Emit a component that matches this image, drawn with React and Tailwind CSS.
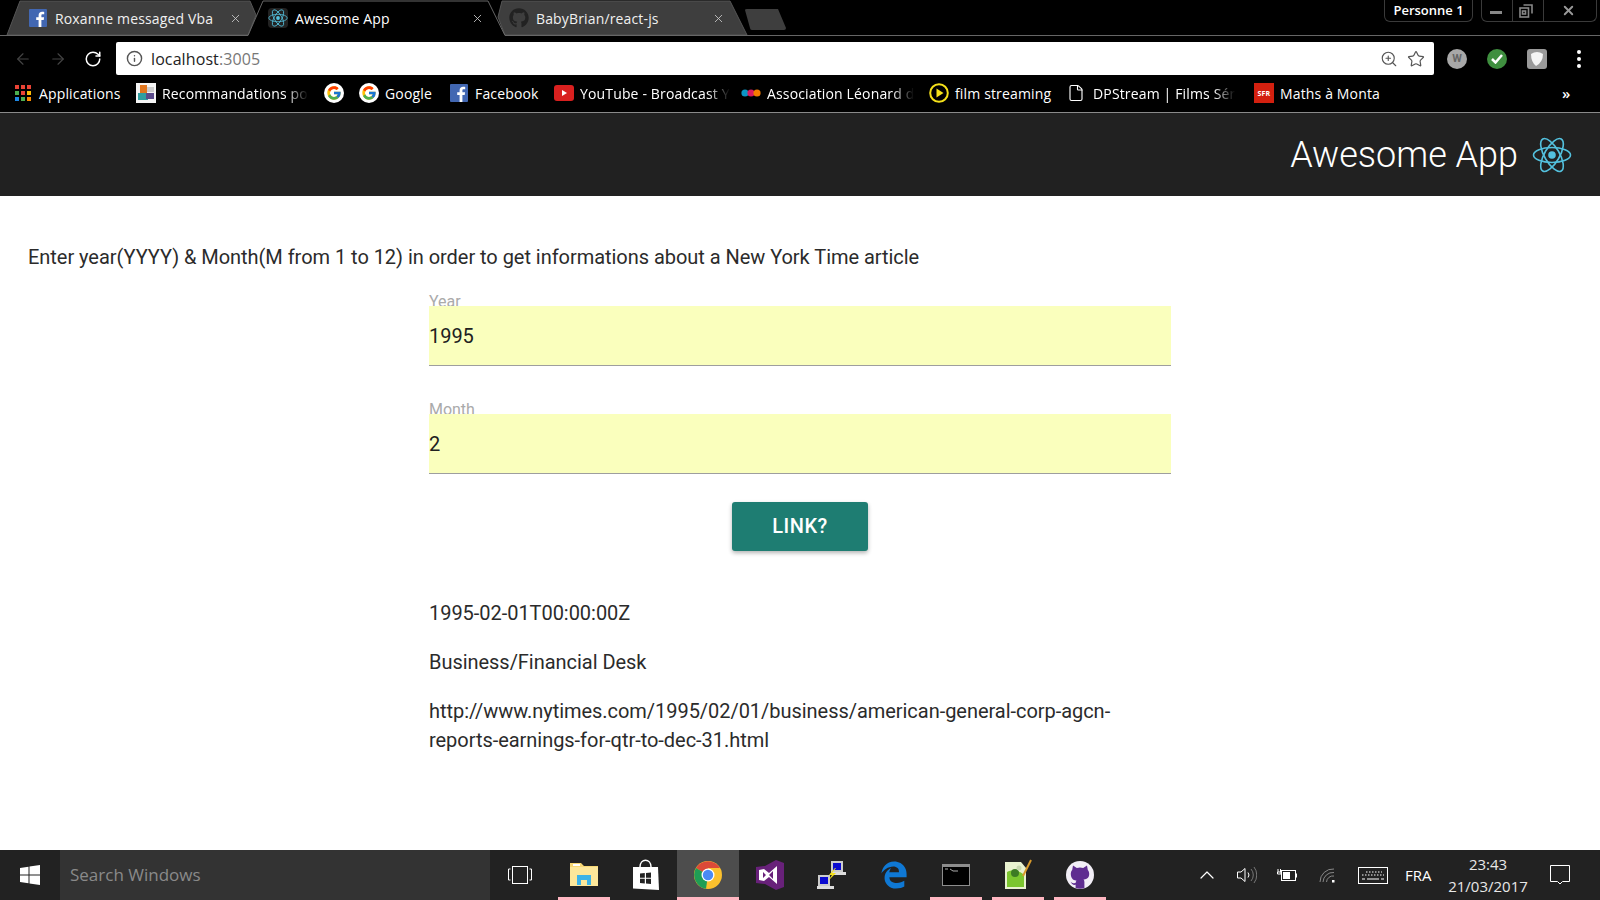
import React from "react";
import { ArrowLeft, ArrowRight, RotateCw, Info, ZoomIn, Star, X, ChevronUp, File } from "lucide-react";
import { FaGithub } from "react-icons/fa";
import { FaEdgeLegacy } from "react-icons/fa6";
import { FcGoogle } from "react-icons/fc";

const ReactLogo = ({ size = 40, color = "#53c1de", sw = 1.6 }) => (
  <svg width={size} height={size} viewBox="0 0 40 40" fill="none" stroke={color} strokeWidth={sw}>
    <ellipse cx="20" cy="20" rx="18.5" ry="7.5" />
    <ellipse cx="20" cy="20" rx="18.5" ry="7.5" transform="rotate(60 20 20)" />
    <ellipse cx="20" cy="20" rx="18.5" ry="7.5" transform="rotate(120 20 20)" />
    <circle cx="20" cy="20" r="3.8" fill={color} stroke="none" />
  </svg>
);

const Fb = ({ size = 18 }) => (
  <svg width={size} height={size} viewBox="0 0 18 18">
    <rect width="18" height="18" rx="1" fill="#4267b2" />
    <path d="M12.4 18v-7h2.3l.4-2.7h-2.7V6.6c0-.8.2-1.3 1.3-1.3h1.5V2.9c-.3 0-1.1-.1-2.1-.1-2.1 0-3.5 1.3-3.5 3.6v1.9H7.2V11h2.4v7z" fill="#fff" />
  </svg>
);

const G = () => (
  <span className="flex h-5 w-5 items-center justify-center rounded-full bg-white">
    <FcGoogle size={16} />
  </span>
);

const Apps = () => (
  <svg width="16" height="16" viewBox="0 0 16 16">
    {[["#ea4335", "#ea4335", "#ea4335"], ["#4caf50", "#ea4335", "#fbbc05"], ["#1e88e5", "#4caf50", "#fb8c00"]].map((row, y) =>
      row.map((c, x) => <rect key={`${x}${y}`} x={x * 6} y={y * 6} width="4" height="4" fill={c} />)
    )}
  </svg>
);

const Recomm = () => (
  <svg width="20" height="20" viewBox="0 0 20 20">
    <rect width="20" height="20" fill="#f4f4f4" />
    <rect x="4" y="2" width="7" height="8" fill="#e0761f" />
    <rect x="11" y="4" width="7" height="5" fill="#ccc" />
    <rect x="2" y="10" width="10" height="7" fill="#2f9ea0" />
    <rect x="10" y="10" width="8" height="6" fill="#5a4a8a" />
  </svg>
);

const Youtube = () => (
  <svg width="20" height="16" viewBox="0 0 20 16">
    <rect width="20" height="16" rx="3" fill="#d9201f" />
    <path d="M8 5l5 3-5 3z" fill="#fff" />
  </svg>
);

const Dots = () => (
  <svg width="20" height="10" viewBox="0 0 20 10">
    <circle cx="4" cy="5" r="3.6" fill="#0b95c5" />
    <circle cx="10" cy="5" r="3.6" fill="#d81b60" />
    <circle cx="16" cy="5" r="3.6" fill="#f57c00" />
  </svg>
);

const PlayCircle = () => (
  <svg width="20" height="20" viewBox="0 0 20 20" fill="none">
    <circle cx="10" cy="10" r="8.8" stroke="#f5e11a" strokeWidth="2" />
    <path d="M7.5 5.5l7 4.5-7 4.5z" fill="#f5e11a" />
  </svg>
);

const Sfr = () => (
  <span className="flex h-5 w-5 items-center justify-center bg-[#d3200f] text-[7px] font-bold leading-none text-white">SFR</span>
);

const Mark = ({ w, children, fade, gap = "ml-[6px]", text }) => (
  <div className="flex shrink-0 items-center" style={{ width: w }}>
    {children}
    {text && (
      <span className={`${gap} whitespace-nowrap ${fade ? "[mask-image:linear-gradient(to_right,black_85%,transparent)]" : ""}`}>
        {text}
      </span>
    )}
  </div>
);

const Tab = ({ w, icon, title, active, mr }) => (
  <div className="relative flex h-[35px] shrink-0 items-center pt-px" style={{ width: w, paddingRight: mr }}>
    <div className="flex w-[20px] shrink-0 items-center justify-center">{icon}</div>
    <span className={`ml-[7px] flex-1 whitespace-nowrap text-[14px] tracking-[0.15px] ${active ? "text-white" : "text-[#f0f0f0]"}`}>{title}</span>
    <X size={13} strokeWidth={1.6} className="text-[#c8c8c8]" />
  </div>
);

const Slot = ({ w = "w-[62px]", children, pink, active }) => (
  <div className={`relative flex h-[50px] ${w} shrink-0 items-center justify-center ${active ? "bg-[#4d4d4d]" : ""}`}>
    {children}
    {pink && <div className={`absolute bottom-0 h-[3px] bg-[#ffb6c1] ${active ? "inset-x-0" : "inset-x-[5px]"}`} />}
  </div>
);

const WinLogo = ({ size = 20 }) => (
  <svg width={size} height={size} viewBox="0 0 20 20" fill="#fff">
    <path d="M0 3l8.5-1.2V9.5H0zM9.5 1.6L20 0v9.5H9.5zM0 10.5h8.5v7.7L0 17zM9.5 10.5H20V20L9.5 18.4z" />
  </svg>
);

const Folder = () => (
  <svg width="28" height="26" viewBox="0 0 28 26">
    <path d="M0 1h11l3 3h14v20H0z" fill="#f7d774" />
    <rect x="0" y="5" width="28" height="19" fill="#fde79a" />
    <rect x="3" y="2" width="7" height="2" fill="#fff" />
    <path d="M7 23V13h14v10h-4v-5h-6v5z" fill="#3db3e8" />
  </svg>
);

const Store = () => (
  <svg width="28" height="32" viewBox="0 0 28 32">
    <path d="M8 8c0-9 11-9 11 0" fill="none" stroke="#fff" strokeWidth="1.5" />
    <path d="M1 8h25l1 23-26-1.5z" fill="#fff" />
    <path d="M8 14.5l4.8-.5v4.700H8zM14 14l5-.5v5.200h-5zM8 19.800h4.800v4.700L8 24zM14 19.800h5V25l-5-.4z" fill="#222" />
  </svg>
);

const Chrome = () => (
  <svg width="28" height="28" viewBox="0 0 28 28">
    <circle cx="14" cy="14" r="14" fill="#fbc02d" />
    <path d="M14 14L2 7a14 14 0 0 1 24 0H14z" fill="#dc4a38" />
    <path d="M14 14L2 7a14 14 0 0 0 10 20.800z" fill="#1f9d55" />
    <circle cx="14" cy="14" r="6.500" fill="#fff" />
    <circle cx="14" cy="14" r="5.200" fill="#4a8af4" />
  </svg>
);

const VS = () => (
  <svg width="28" height="30" viewBox="0 0 28 30">
    <path d="M0 7l9-1 11-6 8 3v24l-8 3-11-6-9-1z" fill="#68217a" />
    <path d="M3 10l5-1 5 4 8-7v18l-8-7-5 4-5-1zM7 12v6l3-3zM17 11l-4 4 4 4z" fill="#fff" fillRule="evenodd" />
  </svg>
);

const Putty = () => (
  <svg width="30" height="30" viewBox="0 0 30 30">
    <rect x="14" y="1" width="12" height="11" fill="#ccc" />
    <rect x="16" y="3" width="8" height="7" fill="#0a0ad0" />
    <rect x="14" y="12" width="15" height="3" fill="#ddd" />
    <rect x="1" y="15" width="12" height="11" fill="#ccc" />
    <rect x="3" y="17" width="8" height="7" fill="#0a0ad0" />
    <rect x="0" y="26" width="17" height="3" fill="#ddd" />
    <path d="M18 8l-6 7 3 0-4 6 8-8h-4l4-5z" fill="#f5e11a" />
  </svg>
);

const Cmd = () => (
  <svg width="28" height="22" viewBox="0 0 28 22">
    <rect width="28" height="22" fill="#8d8d8d" />
    <rect x="1" y="3" width="26" height="18" fill="#000" />
    <path d="M3 5h3M8 5l3 2h5" stroke="#aaa" strokeWidth="1" fill="none" />
  </svg>
);

const Notepad = () => (
  <svg width="28" height="32" viewBox="0 0 28 32">
    <path d="M1 3h16l5 6v21H1z" fill="#e9f2d0" />
    <path d="M3 13c6-3 13-1 17 3v12H3z" fill="#7cc62f" />
    <circle cx="11" cy="14" r="4" fill="#3d7a24" />
    <circle cx="15" cy="9" r="2.500" fill="#c8d8b0" />
    <path d="M19 17L27 1" stroke="#d99a2b" strokeWidth="2" />
  </svg>
);

const GithubCat = () => (
  <svg width="28" height="28" viewBox="0 0 28 28">
    <circle cx="14" cy="14" r="14" fill="#f2eef6" />
    <path d="M7 4.500l3.800 2.500a11 11 0 0 1 6.400 0L21 4.500l.8 4.500c2 2 2 7-.8 8.500-1.200.7-2.800 1-3.500 1.100.6.6.9 1.300.9 2.400V27a14 14 0 0 1-8.800 0v-3.200c-2.500.5-4-.8-5-3 .8.500 2 1.800 3.200 1.500l1.800-.3c0-1 .3-1.700.9-2.300-.7-.1-2.300-.4-3.500-1.100C4.200 16 4.200 11 6.200 9z" fill="#5f2d90" />
  </svg>
);

const Volume = () => (
  <svg width="20" height="20" viewBox="0 0 20 20" fill="none" stroke="#fff" strokeWidth="1">
    <path d="M.5 7H4l4-3.500v13L4 13H.5z" />
    <path d="M11 7.500a4 4 0 0 1 0 5" />
    <path d="M14 4a9 9 0 0 1 0 12M17 2a13 13 0 0 1 0 16" stroke="#777" />
  </svg>
);

const Battery = () => (
  <svg width="20" height="14" viewBox="0 0 20 14" fill="none">
    <rect x="4.500" y="2.500" width="14" height="10" stroke="#fff" />
    <rect x="6" y="4" width="7" height="7" fill="#fff" />
    <rect x="19" y="5.500" width="1" height="4" fill="#fff" />
    <path d="M1 1v3M3.500 1v3M.5 4h3.500v2H.5z" stroke="#fff" />
  </svg>
);

const Wifi = () => (
  <svg width="18" height="16" viewBox="0 0 18 16" fill="none" stroke="#888" strokeWidth="1">
    <path d="M1 15A13 13 0 0 1 15 2" />
    <path d="M4 15A10 10 0 0 1 15 5.500" />
    <path d="M7.500 15A6.500 6.500 0 0 1 15 9" />
    <rect x="13" y="13" width="2.500" height="2.500" fill="#fff" stroke="none" />
  </svg>
);

const Keyboard = () => (
  <svg width="30" height="17" viewBox="0 0 30 17" fill="none" stroke="#fff">
    <rect x=".5" y=".5" width="29" height="16" />
    <path d="M8 5h16M4 8h22" strokeDasharray="1.500 1.500" />
    <path d="M4 12h3M9 12h12M23 12h3" />
  </svg>
);

const Notif = () => (
  <svg width="20" height="20" viewBox="0 0 20 20" fill="none" stroke="#fff">
    <path d="M.5.5h19v16h-7l-2.500 2.500-2.500-2.500h-7z" />
  </svg>
);

export default function App() {
  return (
    <div className="flex h-screen w-full flex-col overflow-hidden bg-white font-[Roboto,sans-serif]">
      {/* Tab strip */}
      <div className="relative h-[36px] shrink-0 bg-black font-['Open_Sans',sans-serif]">
        <svg className="absolute inset-0" width="1600" height="36" fill="none">
          <path d="M7 35L20 1H250L256 15L248 35Z" fill="#3e3e3e" stroke="#555" />
          <path d="M498 17L502 1H730L747 35H505Z" fill="#3e3e3e" stroke="#555" />
          <path d="M0 35.500H248L263 1H488L505 35.500H1600" stroke="#666" />
          <path d="M745 10Q745 9 747 9H778L786 28Q786 30 784 30H752Q750 30 750 28Z" fill="#3e3e3e" />
        </svg>
        <div className="relative flex pl-[28px]">
          <Tab w="240px" mr="26px" title="Roxanne messaged Vba" icon={<Fb />} />
          <Tab w="241px" mr="25px" active title="Awesome App" icon={<span className="flex h-5 w-5 items-center justify-center rounded-sm bg-[#222]"><ReactLogo size={20} sw={1.6} /></span>} />
          <Tab w="241px" mr="25px" title="BabyBrian/react-js" icon={<FaGithub size={20} className="text-[#222]" />} />
        </div>
        <div className="absolute right-[3px] top-0 flex">
          <div className="mr-[8px] flex h-[22px] w-[89px] items-center justify-center rounded-b-md border border-t-0 border-[#3a3a3a] text-[13px] font-semibold text-white">Personne 1</div>
          <div className="flex h-[22px] w-[116px] rounded-b-md border border-t-0 border-[#3a3a3a]">
            <div className="flex w-[31px] items-center justify-center border-r border-[#3a3a3a] pr-[3px]"><div className="mt-[3px] h-[3px] w-[12px] bg-[#888]" /></div>
            <div className="flex w-[31px] items-center justify-center border-r border-[#3a3a3a] pr-[4px]">
              <svg width="14" height="14" viewBox="0 0 14 14" fill="none" stroke="#888" strokeWidth="1.600"><rect x="1" y="4" width="8.500" height="9" /><path d="M4.500 1h8.500v8.500" /><rect x="3.500" y="7" width="3" height="3" /></svg>
            </div>
            <div className="flex flex-1 items-center justify-center pr-[4px] text-[#999]"><X size={15} strokeWidth={3} /></div>
          </div>
        </div>
      </div>

      {/* Toolbar */}
      <div className="flex h-[45px] shrink-0 items-center bg-black">
        <div className="flex w-[116px] shrink-0 items-center">
          <ArrowLeft size={18} strokeWidth={1.500} className="ml-[14px] text-[#444]" />
          <ArrowRight size={18} strokeWidth={1.500} className="ml-[17px] text-[#444]" />
          <RotateCw size={18} strokeWidth={2} className="ml-[17px] text-white" />
        </div>
        <div className="flex h-[33px] w-[1318px] shrink-0 items-center rounded-[2px] bg-white pl-[10px] pr-[9px] font-['Open_Sans',sans-serif]">
          <Info size={17} className="text-[#555]" />
          <span className="ml-[8px] flex-1 text-[16px] tracking-[0.1px] text-[#222]">localhost<span className="text-[#777]">:3005</span></span>
          <ZoomIn size={18} strokeWidth={1.500} className="text-[#555]" />
          <Star size={18} strokeWidth={1.600} className="ml-[9px] text-[#555]" />
        </div>
        <div className="ml-[13px] flex h-5 w-5 items-center justify-center rounded-full bg-[#a8a8a8] text-[11px] font-bold leading-none text-[#666]">W</div>
        <div className="ml-[20px] flex h-5 w-5 items-center justify-center rounded-full bg-[#3f8f3f]">
          <svg width="12" height="10" viewBox="0 0 12 10" fill="none" stroke="#fff" strokeWidth="2.500"><path d="M1 5l3.500 3.500L11 1" /></svg>
        </div>
        <div className="ml-[20px] flex h-5 w-5 items-center justify-center rounded-[3px] bg-[#9a9a9a]">
          <svg width="14" height="16" viewBox="0 0 14 16" fill="#f4f4f4"><path d="M1 3q6-4 12 0q0 8-7 12q-5-4-5-12z" /></svg>
        </div>
        <div className="ml-[30px] flex flex-col gap-[3px]">
          <div className="h-[4px] w-[4px] rounded-full bg-white" />
          <div className="h-[4px] w-[4px] rounded-full bg-white" />
          <div className="h-[4px] w-[4px] rounded-full bg-white" />
        </div>
      </div>

      {/* Bookmarks */}
      <div className="flex h-[31px] shrink-0 items-center bg-black pb-[7px] pl-[15px] font-['Open_Sans',sans-serif] text-[14px] tracking-[0.15px] text-white">
        <Mark w="121px" text="Applications" gap="ml-[8px]"><Apps /></Mark>
        <Mark w="188px" text="Recommandations po" fade><Recomm /></Mark>
        <Mark w="35px"><G /></Mark>
        <Mark w="91px" text="Google"><G /></Mark>
        <Mark w="104px" text="Facebook" gap="ml-[7px]"><Fb /></Mark>
        <Mark w="187px" text="YouTube - Broadcast Y" fade><Youtube /></Mark>
        <Mark w="188px" text="Association Léonard d" fade><Dots /></Mark>
        <Mark w="138px" text="film streaming"><PlayCircle /></Mark>
        <Mark w="187px" text="DPStream | Films Sér" fade gap="ml-[8px]"><File size={18} strokeWidth={1.500} /></Mark>
        <Mark w="308px" text="Maths à Monta"><Sfr /></Mark>
        <span className="text-[15px] font-semibold">»</span>
      </div>
      <div className="h-px shrink-0 bg-[#8a8a8a]" />

      {/* App bar */}
      <header className="flex h-[83px] shrink-0 items-center justify-end gap-[14px] bg-[#212121] pr-[28px]">
        <span className="text-[36px] font-light leading-none text-white">Awesome App</span>
        <ReactLogo />
      </header>

      {/* Main */}
      <main className="flex-1 text-[20px] leading-[29px] tracking-[-0.04px] text-[#2b2b2b]">
        <p className="ml-[28px] mt-[47px]">Enter year(YYYY) &amp; Month(M from 1 to 12) in order to get informations about a New York Time article</p>
        <div className="mx-auto mt-[20px] w-[742px]">
          <label className="block h-[14px] text-[16px] leading-[20px] text-[#aaaaaa]">Year</label>
          <input readOnly value="1995" className="relative block h-[60px] w-full border-b border-[#9e9e9e] bg-[#faffbd] text-[20px] text-[#212121] outline-none" />
          <label className="mt-[34px] block h-[14px] text-[16px] leading-[20px] text-[#aaaaaa]">Month</label>
          <input readOnly value="2" className="relative block h-[60px] w-full border-b border-[#9e9e9e] bg-[#faffbd] text-[20px] text-[#212121] outline-none" />
          <div className="mt-[28px] flex justify-center">
            <button className="h-[49px] w-[136px] rounded-[3px] bg-[#1e7d72] text-[20px] font-medium tracking-[0.5px] text-white shadow-[0_2px_4px_rgba(0,0,0,0.3)]">LINK?</button>
          </div>
          <p className="mt-[48px]">1995-02-01T00:00:00Z</p>
          <p className="mt-[20px]">Business/Financial Desk</p>
          <p className="mt-[20px]">http://www.nytimes.com/1995/02/01/business/american-general-corp-agcn-reports-earnings-for-qtr-to-dec-31.html</p>
        </div>
      </main>

      {/* Taskbar */}
      <footer className="flex h-[50px] shrink-0 items-center bg-[#222222]">
        <div className="flex h-[50px] w-[60px] shrink-0 items-center justify-center"><WinLogo /></div>
        <div className="flex h-[50px] w-[430px] shrink-0 items-center bg-[#333333] pl-[10px] font-['Open_Sans',sans-serif] text-[17px] text-[#8a8a8a]">Search Windows</div>
        <Slot w="w-[63px] pr-[3px]">
          <svg width="24" height="18" viewBox="0 0 24 18" fill="none" stroke="#fff"><rect x="4.500" y=".5" width="15" height="17" /><path d="M2.500 3H.5v11h2M21.500 3h2v11h-2" /></svg>
        </Slot>
        <Slot pink><Folder /></Slot>
        <Slot><Store /></Slot>
        <Slot pink active><Chrome /></Slot>
        <Slot><VS /></Slot>
        <Slot><Putty /></Slot>
        <Slot><FaEdgeLegacy size={28} className="text-[#0f78d4]" /></Slot>
        <Slot pink><Cmd /></Slot>
        <Slot pink><Notepad /></Slot>
        <Slot pink><GithubCat /></Slot>
        <div className="ml-[85px] flex flex-1 items-center font-['Open_Sans',sans-serif] text-white">
          <ChevronUp size={24} strokeWidth={1.200} className="-ml-px -mr-px" />
          <div className="ml-[19px]"><Volume /></div>
          <div className="ml-[20px]"><Battery /></div>
          <div className="ml-[22px]"><Wifi /></div>
          <div className="ml-[21px]"><Keyboard /></div>
          <span className="ml-[17px] w-[27px] text-[15px]">FRA</span>
          <div className="ml-[14px] flex w-[84px] flex-col items-center text-[15px] leading-[22px] text-[#e8e8e8]">
            <span>23:43</span>
            <span>21/03/2017</span>
          </div>
          <div className="ml-[20px]"><Notif /></div>
        </div>
      </footer>
    </div>
  );
}
